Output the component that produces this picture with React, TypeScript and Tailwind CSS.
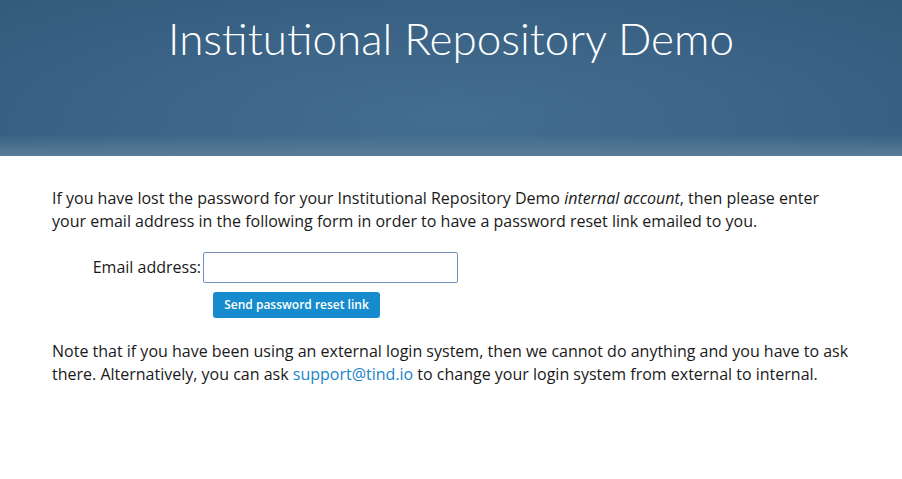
export default function App() {
  return (
    <div className="min-h-[479px] bg-white" style={{ fontFamily: '"Open Sans", "Liberation Sans", sans-serif' }}>
      <header className="relative h-[156px] bg-[radial-gradient(ellipse_at_50%_75%,#436d91_0%,#3c6588_45%,#345a7b_100%)]">
        <h1 className="pt-[10px] text-center text-[44px] leading-[56px] font-light text-white [font-family:Lato,'Open_Sans',sans-serif]">
          Institutional Repository Demo
        </h1>
        <div className="absolute inset-x-0 bottom-0 h-[22px] bg-gradient-to-b from-transparent to-[#5a7d98]" />
      </header>

      <main className="px-[52px] pt-[31px] text-[16px] leading-[23px] text-[#1a1a1a]">
        <p>
          If you have lost the password for your Institutional Repository Demo <em>internal account</em>, then please
          enter your email address in the following form in order to have a password reset link emailed to you.
        </p>

        <form className="mt-[19px] flex flex-col" onSubmit={(e) => e.preventDefault()}>
          <div className="flex items-center">
            <label htmlFor="email" className="w-[149px] text-right">
              Email address:
            </label>
            <input
              id="email"
              type="text"
              className="ml-[2px] h-[31px] w-[255px] rounded-[2px] border border-[#7390bd] bg-white px-2 outline-none"
            />
          </div>
          <div className="mt-[9px] pl-[161px]">
            <button
              type="submit"
              className="h-[26px] w-[167px] rounded-[3px] bg-[#168ccf] text-[12px] leading-[26px] font-semibold text-white"
            >
              Send password reset link
            </button>
          </div>
        </form>

        <p className="mt-[22px]">
          Note that if you have been using an external login system, then we cannot do anything and you have to ask
          there. Alternatively, you can ask{' '}
          <a href="#" className="text-[#1a85c9]">
            support@tind.io
          </a>{' '}
          to change your login system from external to internal.
        </p>
      </main>
    </div>
  );
}
